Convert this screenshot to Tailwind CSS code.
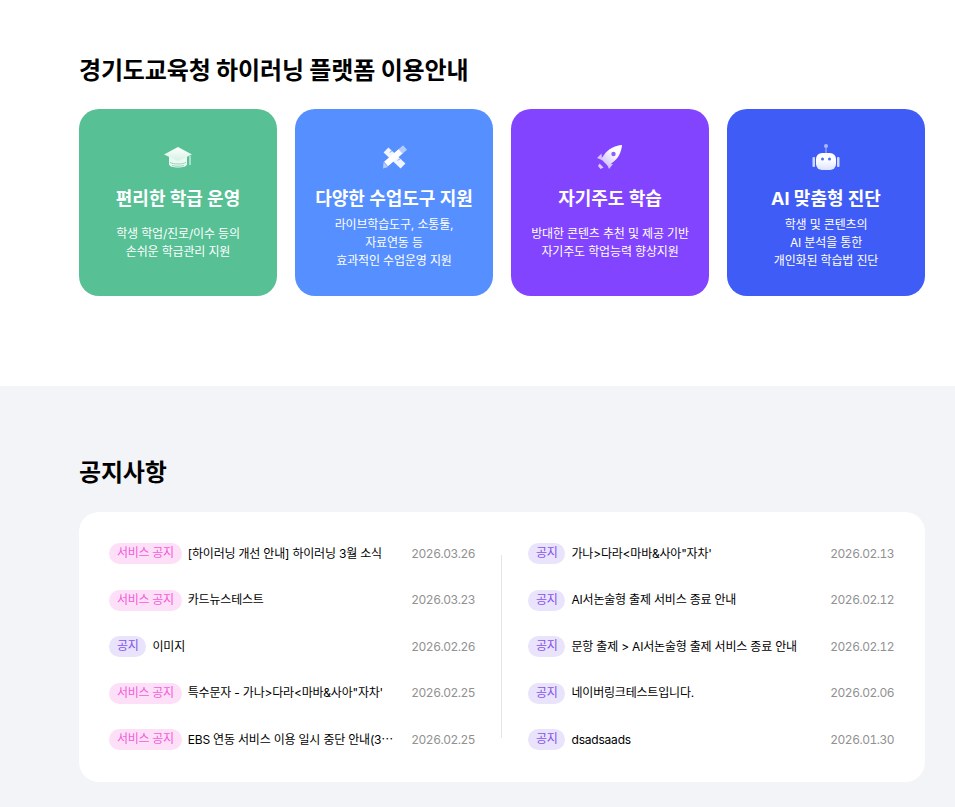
<!DOCTYPE html>
<html lang="ko">
<head>
  <meta charset="UTF-8">
  <meta name="viewport" content="width=device-width, initial-scale=1.0">
  <title>경기도교육청 하이러닝</title>
  <script src="https://cdn.jsdelivr.net/npm/@tailwindcss/browser@4"></script>
</head>
<body class="bg-white text-black font-['Inter','Noto_Sans_CJK_KR',sans-serif] overflow-hidden">
  <section class="h-[386px] px-[79px] pt-[54px]">
    <h2 class="text-[24px] leading-[34px] font-bold tracking-[-0.15px]">경기도교육청 하이러닝 플랫폼 이용안내</h2>
    <div class="mt-[21px] flex gap-[18px] text-white text-center">
      <div class="w-[198px] shrink-0 h-[187px] rounded-[20px] bg-[#57c095] pt-[34px]">
        <svg class="mx-auto w-7 h-7" viewBox="0 0 28 28">
          <defs><linearGradient id="g1" x1="0" y1="0" x2="0" y2="1"><stop offset="0" stop-color="#fff"/><stop offset="1" stop-color="#d3f1e3"/></linearGradient></defs>
          <path d="M5 13v8c0 2.500 4 3.500 9 3.500s9-1 9-3.500v-8l-9 4z" fill="#ecf9f3"/>
          <path d="M14 4 28 11.500 14 18 0 11.500z" fill="url(#g1)"/>
          <path d="M6 19.500c4 2 12 2 16 0M8 22.500c3 1 9 1 12 0" stroke="#8fd6b8" stroke-width="1" fill="none"/>
          <rect x="25" y="13" width="2" height="9" fill="#a5e0c8"/>
        </svg>
        <h3 class="mt-[14px] text-lg leading-[28px] font-bold">편리한 학급 운영</h3>
        <div class="mt-[3px] h-[54px] flex items-center justify-center text-[12px] leading-[18px] tracking-[-0.15px]"><p>학생 학업/진로/이수 등의<br>손쉬운 학급관리 지원</p></div>
      </div>
      <div class="w-[198px] shrink-0 h-[187px] rounded-[20px] bg-[#568fff] pt-[34px]">
        <svg class="mx-auto w-7 h-7" viewBox="0 0 28 28">
          <path d="M6 7 23 23" stroke="#f1f5ff" stroke-width="7"/>
          <path d="M8 3.500 6 5.500M12 7.500 10 9.500M16 11.500 14 13.500M20 15.500 18 17.500" stroke="#568fff" stroke-width="1"/>
          <path d="M6 21 21 8" stroke="#fff" stroke-width="6"/>
          <path d="M20.500 8.500 25 4.500" stroke="#b4cbff" stroke-width="6"/>
          <path d="M3 25.500 3.500 19 8 24z" fill="#b4cbff"/>
        </svg>
        <h3 class="mt-[14px] text-lg leading-[28px] font-bold">다양한 수업도구 지원</h3>
        <div class="mt-[3px] h-[54px] flex items-center justify-center text-[12px] leading-[18px] tracking-[-0.15px]"><p>라이브학습도구, 소통툴,<br>자료연동 등<br>효과적인 수업운영 지원</p></div>
      </div>
      <div class="w-[198px] shrink-0 h-[187px] rounded-[20px] bg-[#8244ff] pt-[34px]">
        <svg class="mx-auto w-7 h-7" viewBox="0 0 28 28">
          <defs><linearGradient id="g3" x1="1" y1="0" x2="0" y2="1"><stop offset="0.35" stop-color="#fff"/><stop offset="1" stop-color="#c9b3ff"/></linearGradient></defs>
          <path d="M5.500 10.500 1 15 6 17zM17 21 13 26 11 21z" fill="#d5c4ff"/>
          <path d="M26 2C19 2.500 12 6 8 12L5 16 12 23 16 20C22 16 25.500 9 26 2z" fill="url(#g3)"/>
          <path d="M3.500 20.500 7.500 24.500 4.500 26 2 23z" fill="#d9c9ff"/>
          <circle cx="17.500" cy="11" r="2.200" fill="#8f5cff"/>
        </svg>
        <h3 class="mt-[14px] text-lg leading-[28px] font-bold">자기주도 학습</h3>
        <div class="mt-[3px] h-[54px] flex items-center justify-center text-[12px] leading-[18px] tracking-[-0.15px]"><p>방대한 콘텐츠 추천 및 제공 기반<br>자기주도 학업능력 향상지원</p></div>
      </div>
      <div class="w-[198px] shrink-0 h-[187px] rounded-[20px] bg-[#3f5cf7] pt-[34px]">
        <svg class="mx-auto w-7 h-7" viewBox="0 0 28 28">
          <defs><linearGradient id="g4" x1="0" y1="0" x2="0" y2="1"><stop offset="0.4" stop-color="#fff"/><stop offset="1" stop-color="#dbe2ff"/></linearGradient></defs>
          <circle cx="14" cy="3" r="2" fill="#a9b8ff"/>
          <rect x="13.500" y="4.500" width="1" height="5.500" fill="#a9b8ff"/>
          <rect x="4" y="10" width="20" height="17" rx="6" fill="url(#g4)"/>
          <rect x="0.500" y="14" width="2.500" height="10" rx="1" fill="#cfd8ff"/>
          <rect x="25" y="14" width="2.500" height="10" rx="1" fill="#cfd8ff"/>
          <circle cx="10.500" cy="16" r="1.500" fill="#4f6cf8"/>
          <circle cx="17.500" cy="16" r="1.500" fill="#4f6cf8"/>
        </svg>
        <h3 class="mt-[14px] text-lg leading-[28px] font-bold">AI 맞춤형 진단</h3>
        <div class="mt-[3px] h-[54px] flex items-center justify-center text-[12px] leading-[18px] tracking-[-0.15px]"><p>학생 및 콘텐츠의<br>AI 분석을 통한<br>개인화된 학습법 진단</p></div>
      </div>
    </div>
  </section>

  <section class="h-[421px] bg-[#f2f4f8] px-[79px] pt-[70px]">
    <h2 class="text-[24px] leading-[34px] font-bold tracking-[-0.2px]">공지사항</h2>
    <div class="mt-[22px] w-[846px] h-[270px] bg-white rounded-[20px] pl-[30px] pt-[31px] flex text-[12px] tracking-[-0.2px]">
      <ul class="w-[366px] flex flex-col gap-[25.5px]">
        <li class="h-[21px] flex items-center"><span class="shrink-0 h-[21px] px-2 leading-[20px] rounded-full bg-[#fde0f8] text-[#f65bd8] tracking-[-0.3px]">서비스 공지</span><a class="ml-[6px]">[하이러닝 개선 안내] 하이러닝 3월 소식</a><span class="ml-auto text-[#919191] tabular-nums tracking-[-0.5px]">2026.03.26</span></li>
        <li class="h-[21px] flex items-center"><span class="shrink-0 h-[21px] px-2 leading-[20px] rounded-full bg-[#fde0f8] text-[#f65bd8] tracking-[-0.3px]">서비스 공지</span><a class="ml-[6px]">카드뉴스테스트</a><span class="ml-auto text-[#919191] tabular-nums tracking-[-0.5px]">2026.03.23</span></li>
        <li class="h-[21px] flex items-center"><span class="shrink-0 h-[21px] px-2 leading-[20px] rounded-full bg-[#e9e3fb] text-[#8552ee] tracking-[-0.3px]">공지</span><a class="ml-[6px]">이미지</a><span class="ml-auto text-[#919191] tabular-nums tracking-[-0.5px]">2026.02.26</span></li>
        <li class="h-[21px] flex items-center"><span class="shrink-0 h-[21px] px-2 leading-[20px] rounded-full bg-[#fde0f8] text-[#f65bd8] tracking-[-0.3px]">서비스 공지</span><a class="ml-[6px]">특수문자 - 가나&gt;다라&lt;마바&amp;사아"자차'</a><span class="ml-auto text-[#919191] tabular-nums tracking-[-0.5px]">2026.02.25</span></li>
        <li class="h-[21px] flex items-center"><span class="shrink-0 h-[21px] px-2 leading-[20px] rounded-full bg-[#fde0f8] text-[#f65bd8] tracking-[-0.3px]">서비스 공지</span><a class="ml-[6px]">EBS 연동 서비스 이용 일시 중단 안내(3⋯</a><span class="ml-auto text-[#919191] tabular-nums tracking-[-0.5px]">2026.02.25</span></li>
      </ul>
      <div class="ml-[26px] mr-[26px] mt-[12px] w-px h-[183px] bg-[#e3e4e8]"></div>
      <ul class="w-[366px] flex flex-col gap-[25.5px]">
        <li class="h-[21px] flex items-center"><span class="shrink-0 h-[21px] px-2 leading-[20px] rounded-full bg-[#e9e3fb] text-[#8552ee] tracking-[-0.3px]">공지</span><a class="ml-[6px]">가나&gt;다라&lt;마바&amp;사아"자차'</a><span class="ml-auto text-[#919191] tabular-nums tracking-[-0.5px]">2026.02.13</span></li>
        <li class="h-[21px] flex items-center"><span class="shrink-0 h-[21px] px-2 leading-[20px] rounded-full bg-[#e9e3fb] text-[#8552ee] tracking-[-0.3px]">공지</span><a class="ml-[6px]">AI서논술형 출제 서비스 종료 안내</a><span class="ml-auto text-[#919191] tabular-nums tracking-[-0.5px]">2026.02.12</span></li>
        <li class="h-[21px] flex items-center"><span class="shrink-0 h-[21px] px-2 leading-[20px] rounded-full bg-[#e9e3fb] text-[#8552ee] tracking-[-0.3px]">공지</span><a class="ml-[6px]">문항 출제 &gt; AI서논술형 출제 서비스 종료 안내</a><span class="ml-auto text-[#919191] tabular-nums tracking-[-0.5px]">2026.02.12</span></li>
        <li class="h-[21px] flex items-center"><span class="shrink-0 h-[21px] px-2 leading-[20px] rounded-full bg-[#e9e3fb] text-[#8552ee] tracking-[-0.3px]">공지</span><a class="ml-[6px]">네이버링크테스트입니다.</a><span class="ml-auto text-[#919191] tabular-nums tracking-[-0.5px]">2026.02.06</span></li>
        <li class="h-[21px] flex items-center"><span class="shrink-0 h-[21px] px-2 leading-[20px] rounded-full bg-[#e9e3fb] text-[#8552ee] tracking-[-0.3px]">공지</span><a class="ml-[6px]">dsadsaads</a><span class="ml-auto text-[#919191] tabular-nums tracking-[-0.5px]">2026.01.30</span></li>
      </ul>
    </div>
  </section>
</body>
</html>
